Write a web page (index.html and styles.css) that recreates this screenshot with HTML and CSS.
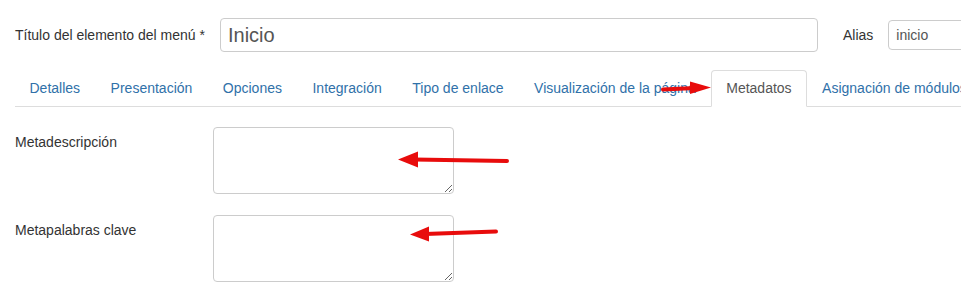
FILE: index.html
```html
<!DOCTYPE html>
<html lang="es">
<head>
  <meta charset="UTF-8">
  <title>Metadatos</title>
  <link rel="stylesheet" href="styles.css">
</head>
<body>
  <div class="page">
    <div class="title-row">
      <label class="title-label">Título del elemento del menú *</label>
      <input class="title-input" type="text" value="Inicio">
      <label class="alias-label">Alias</label>
      <input class="alias-input" type="text" value="inicio">
    </div>
    <ul class="tabs">
      <li><a>Detalles</a></li>
      <li><a>Presentación</a></li>
      <li><a>Opciones</a></li>
      <li><a>Integración</a></li>
      <li><a>Tipo de enlace</a></li>
      <li><a>Visualización de la página</a></li>
      <li class="active"><a>Metadatos</a></li>
      <li><a>Asignación de módulos</a></li>
    </ul>
    <div class="tab-pane">
      <div class="field">
        <label>Metadescripción</label>
        <textarea></textarea>
      </div>
      <div class="field">
        <label>Metapalabras clave</label>
        <textarea></textarea>
      </div>
    </div>
    <svg class="marks" width="961" height="302" viewBox="0 0 961 302">
      <g fill="#e80c0c" stroke="#e80c0c" stroke-linecap="round">
        <line x1="663" y1="89.5" x2="695" y2="88" stroke-width="4"/>
        <polygon points="690,81.5 711,87.5 690,94" stroke="none"/>
        <line x1="507" y1="161" x2="414" y2="159.5" stroke-width="4"/>
        <polygon points="418,151.5 398,159.5 418,167.5" stroke="none"/>
        <line x1="496" y1="231.5" x2="425" y2="234" stroke-width="4"/>
        <polygon points="429,226.5 410,234.5 429,241.5" stroke="none"/>
      </g>
    </svg>
  </div>
</body>
</html>
```
FILE: styles.css
```css
:root{--link:#3071a9;--text:#333;--muted:#555;--border:#ccc;--tab-border:#ddd}
body{margin:0;background:#fff;font-family:'Liberation Sans',Arial,sans-serif;font-size:14px;color:var(--text);overflow:hidden}
.page{position:relative;width:961px;height:302px;overflow:hidden;padding-left:15px;box-sizing:border-box}
.title-row{display:flex;align-items:center;margin-top:18px;white-space:nowrap}
.title-label{width:205px;flex:none}
.title-input{flex:none;width:598px;height:34px;box-sizing:border-box;padding:0 7px;border:1px solid var(--border);border-radius:4px;font:20px 'Liberation Sans',Arial,sans-serif;color:var(--muted)}
.alias-label{margin-left:25px;flex:none}
.alias-input{flex:none;margin-left:15px;width:100px;height:30px;box-sizing:border-box;padding:0 7px;border:1px solid var(--border);border-radius:4px;font:14px 'Liberation Sans',Arial,sans-serif;color:var(--muted)}
.tabs{display:flex;list-style:none;margin:18px 0 0;padding:0;border-bottom:1px solid var(--tab-border);white-space:nowrap}
.tabs li{margin-bottom:-1px;margin-right:.5px;flex:none}
.tabs a{display:block;padding:8px 14px;line-height:19px;border:1px solid transparent;border-radius:4px 4px 0 0;color:var(--link)}
.tabs li:first-child a{padding-left:13.5px}
.tabs .active a{color:var(--muted);background:#fff;border-color:var(--tab-border);border-bottom-color:transparent}
.tab-pane{padding-top:20px}
.field{display:flex;margin-bottom:21px}
.field label{width:198px;flex:none;padding-top:5px;line-height:20px}
.field textarea{width:241px;height:67px;box-sizing:border-box;border:1px solid var(--border);border-radius:4px;padding:6px;font:14px 'Liberation Sans',Arial,sans-serif}
.marks{position:absolute;top:0;left:0}
```
